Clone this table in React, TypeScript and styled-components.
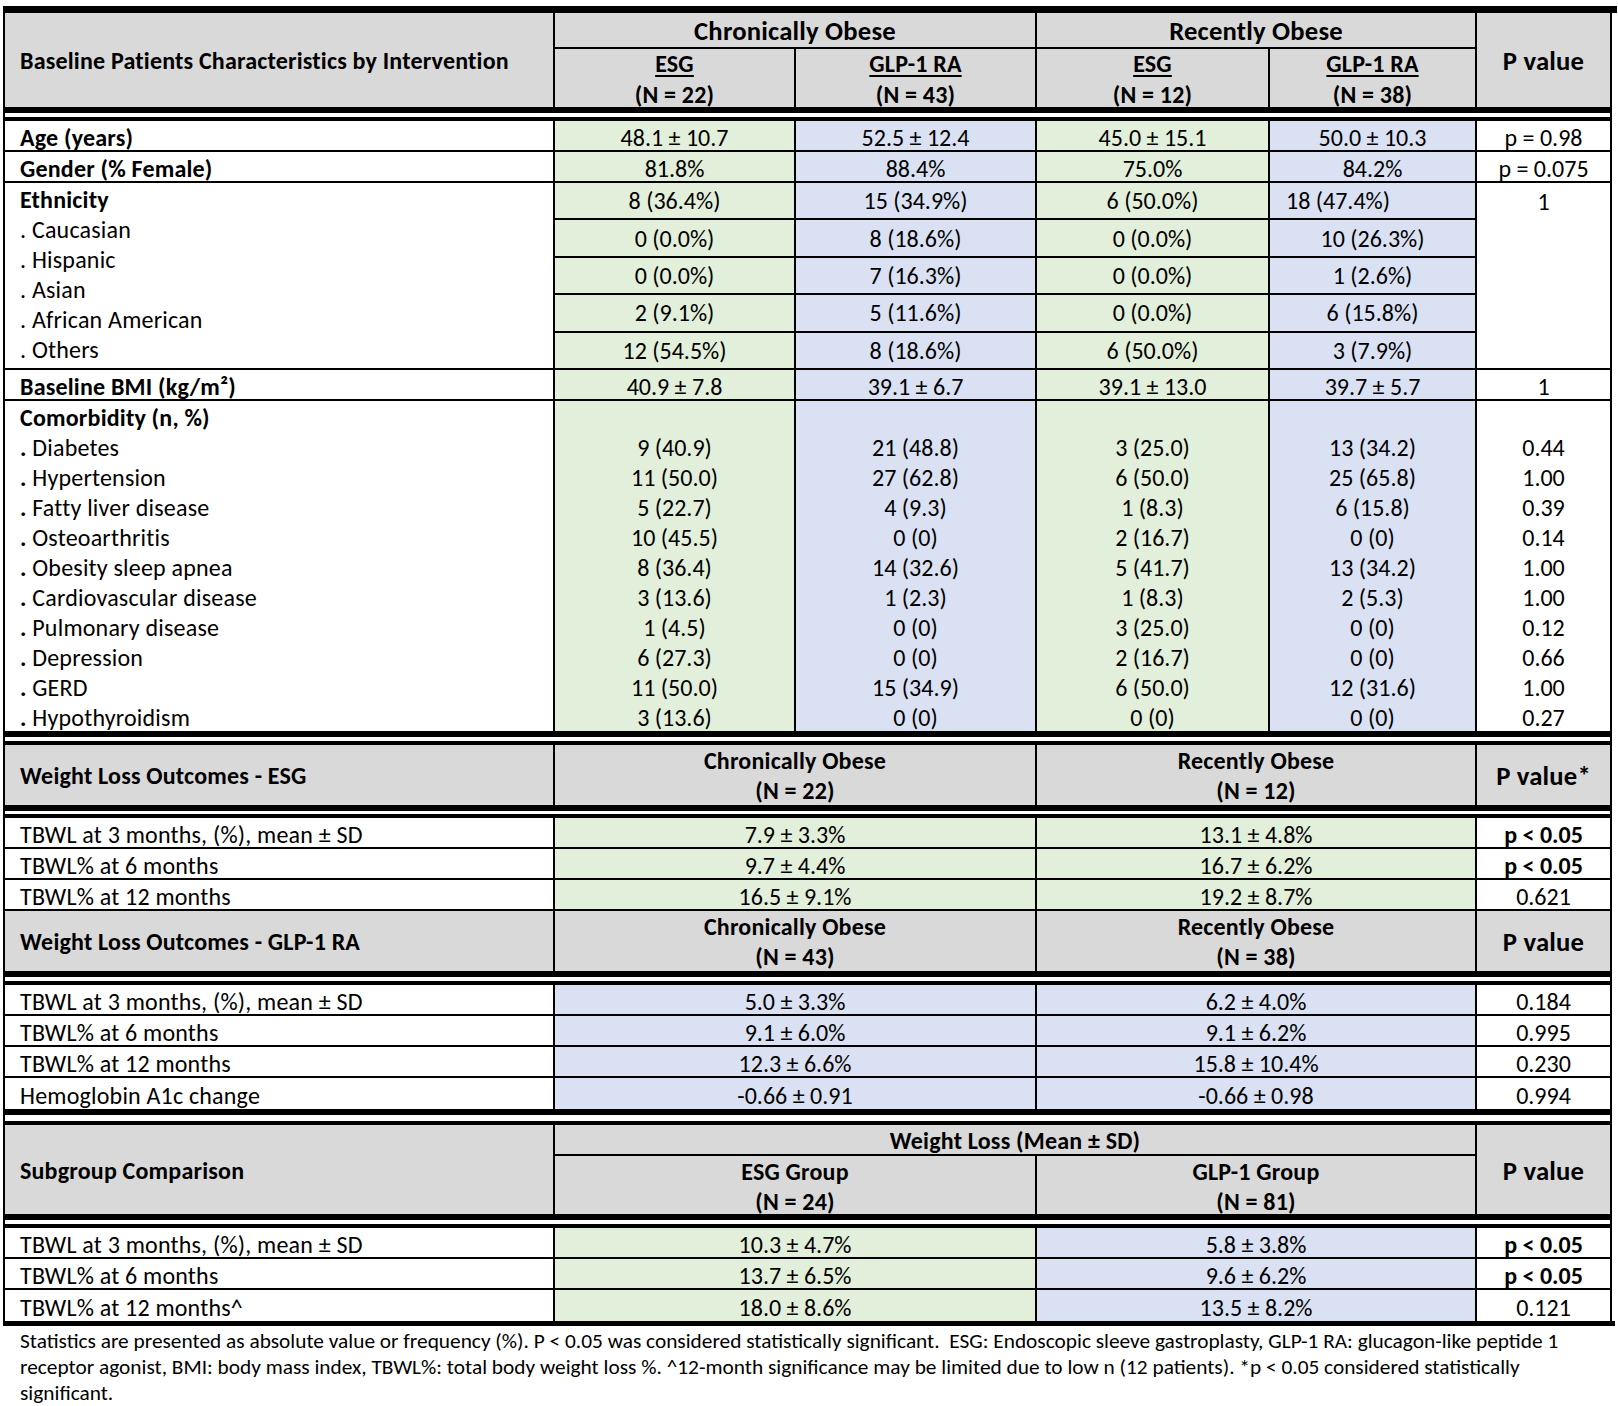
import React from "react";
import styled, { createGlobalStyle } from "styled-components";

const GRAY = "#d9d9d9";
const GREEN = "#e2efda";
const BLUE = "#d9e1f2";
const COLS = "550px 241px 241px 233px 207px 135px";
const FONT = `Carlito, Calibri, Lato, "Liberation Sans", sans-serif`;

type Tone = "white" | "gray" | "green" | "blue";
const toneBg: Record<Tone, string> = { white: "#fff", gray: GRAY, green: GREEN, blue: BLUE };

const GlobalStyle = createGlobalStyle`
  html, body { margin: 0; padding: 0; background: #fff; }
  body { font-family: ${FONT}; color: #000; font-size: 24px; }
  * { box-sizing: border-box; }
`;

const Page = styled.div`
  padding: 6px 0 0 3px;
  width: 1618px;
`;

const TopRule = styled.div`
  width: 1614px;
  height: 7px;
  background: #000;
`;

const BottomRule = styled.div`
  width: 1612px;
  height: 5px;
  background: #000;
`;

const Table = styled.div`
  width: 1609px;
  border-left: 2px solid #000;
`;

const DoubleRule = styled.div<{ $h?: number }>`
  height: ${(p) => p.$h ?? 14}px;
  border-top: 6px solid #000;
  border-bottom: 4px solid #000;
  border-right: 2px solid #000;
  background: #fff;
`;

const HeadGrid = styled.div<{ $rows: string }>`
  display: grid;
  grid-template-columns: ${COLS};
  grid-template-rows: ${(p) => p.$rows};
  background: ${GRAY};
  font-weight: 700;
`;

const HeadCell = styled.div<{
  $col: string;
  $row?: string;
  $big?: boolean;
  $left?: boolean;
  $rule?: boolean;
  $lh?: number;
  $top?: number;
}>`
  grid-column: ${(p) => p.$col};
  grid-row: ${(p) => p.$row ?? "1"};
  min-height: 0;
  display: flex;
  flex-direction: column;
  justify-content: ${(p) => (p.$top !== undefined ? "flex-start" : "center")};
  align-items: ${(p) => (p.$left ? "flex-start" : "center")};
  padding-left: ${(p) => (p.$left ? 15 : 0)}px;
  padding-top: ${(p) => p.$top ?? 2}px;
  border-right: 2px solid #000;
  border-bottom: ${(p) => (p.$rule ? "2px solid #000" : "0")};
  font-size: ${(p) => (p.$big ? "26.67px" : "24px")};
  line-height: ${(p) => p.$lh ?? 30}px;
  letter-spacing: 0.2px;
  white-space: nowrap;
  text-align: center;
`;

const Under = styled.span`
  text-decoration: underline;
  text-decoration-thickness: 2px;
  text-underline-offset: 3px;
`;

const Row = styled.div<{ $h: number; $line?: boolean }>`
  display: grid;
  grid-template-columns: ${COLS};
  grid-template-rows: minmax(0, 1fr);
  height: ${(p) => p.$h}px;
  border-bottom: ${(p) => (p.$line ? "2px solid #000" : "0")};
`;

const Cell = styled.div<{ $tone?: Tone; $span?: number; $label?: boolean; $bold?: boolean }>`
  grid-column: span ${(p) => p.$span ?? 1};
  min-height: 0;
  display: flex;
  align-items: center;
  justify-content: ${(p) => (p.$label ? "flex-start" : "center")};
  padding-left: ${(p) => (p.$label ? 15 : 0)}px;
  padding-top: 4px;
  line-height: 24px;
  border-right: 2px solid #000;
  background: ${(p) => toneBg[p.$tone ?? "white"]};
  font-weight: ${(p) => (p.$bold ? 700 : 400)};
  letter-spacing: ${(p) => (p.$label ? "0.2px" : "0")};
  white-space: nowrap;
`;

const Dot = styled.span`
  font-weight: 700;
`;

const LabelStack = styled.div`
  padding: 2px 0 0 15px;
  border-right: 2px solid #000;
  line-height: 30px;
  letter-spacing: 0.2px;
  white-space: nowrap;
`;

const StackLine = styled.div<{ $bold?: boolean }>`
  font-weight: ${(p) => (p.$bold ? 700 : 400)};
`;

const SubStack = styled.div<{ $tone: Tone; $plain?: boolean }>`
  display: flex;
  flex-direction: column;
  min-height: 0;
  background: ${(p) => toneBg[p.$tone]};
  border-right: 2px solid #000;
  & > * + * {
    border-top: ${(p) => (p.$plain ? "0" : "2px solid #000")};
  }
`;

const SubCell = styled.div<{ $indent?: number }>`
  flex: 1 1 0;
  display: flex;
  align-items: center;
  justify-content: ${(p) => (p.$indent ? "flex-start" : "center")};
  padding-left: ${(p) => p.$indent ?? 0}px;
  white-space: nowrap;
`;

const Footnote = styled.div`
  padding: 2px 0 0 17px;
  font-size: 21.33px;
  line-height: 26px;
`;

const FootLine = styled.div`
  white-space: nowrap;
`;

const tones: Tone[] = ["green", "blue", "green", "blue"];

const basics = [
  { label: "Age (years)", vals: ["48.1 ± 10.7", "52.5 ± 12.4", "45.0 ± 15.1", "50.0 ± 10.3"], p: "p = 0.98" },
  { label: "Gender (% Female)", vals: ["81.8%", "88.4%", "75.0%", "84.2%"], p: "p = 0.075" },
];

const ethnicLabels = ["Caucasian", "Hispanic", "Asian", "African American", "Others"];
const ethnicCols = [
  ["8 (36.4%)", "0 (0.0%)", "0 (0.0%)", "2 (9.1%)", "12 (54.5%)"],
  ["15 (34.9%)", "8 (18.6%)", "7 (16.3%)", "5 (11.6%)", "8 (18.6%)"],
  ["6 (50.0%)", "0 (0.0%)", "0 (0.0%)", "0 (0.0%)", "6 (50.0%)"],
  ["18 (47.4%)", "10 (26.3%)", "1 (2.6%)", "6 (15.8%)", "3 (7.9%)"],
];

const comorbid = [
  { label: "Diabetes", vals: ["9 (40.9)", "21 (48.8)", "3 (25.0)", "13 (34.2)"], p: "0.44" },
  { label: "Hypertension", vals: ["11 (50.0)", "27 (62.8)", "6 (50.0)", "25 (65.8)"], p: "1.00" },
  { label: "Fatty liver disease", vals: ["5 (22.7)", "4 (9.3)", "1 (8.3)", "6 (15.8)"], p: "0.39" },
  { label: "Osteoarthritis", vals: ["10 (45.5)", "0 (0)", "2 (16.7)", "0 (0)"], p: "0.14" },
  { label: "Obesity sleep apnea", vals: ["8 (36.4)", "14 (32.6)", "5 (41.7)", "13 (34.2)"], p: "1.00" },
  { label: "Cardiovascular disease", vals: ["3 (13.6)", "1 (2.3)", "1 (8.3)", "2 (5.3)"], p: "1.00" },
  { label: "Pulmonary disease", vals: ["1 (4.5)", "0 (0)", "3 (25.0)", "0 (0)"], p: "0.12" },
  { label: "Depression", vals: ["6 (27.3)", "0 (0)", "2 (16.7)", "0 (0)"], p: "0.66" },
  { label: "GERD", vals: ["11 (50.0)", "15 (34.9)", "6 (50.0)", "12 (31.6)"], p: "1.00" },
  { label: "Hypothyroidism", vals: ["3 (13.6)", "0 (0)", "0 (0)", "0 (0)"], p: "0.27" },
];

type PairRow = { label: string; a: string; b: string; p: string; bold?: boolean };

const esgRows: PairRow[] = [
  { label: "TBWL at 3 months, (%), mean ± SD", a: "7.9 ± 3.3%", b: "13.1 ± 4.8%", p: "p < 0.05", bold: true },
  { label: "TBWL% at 6 months", a: "9.7 ± 4.4%", b: "16.7 ± 6.2%", p: "p < 0.05", bold: true },
  { label: "TBWL% at 12 months", a: "16.5 ± 9.1%", b: "19.2 ± 8.7%", p: "0.621" },
];

const glpRows: PairRow[] = [
  { label: "TBWL at 3 months, (%), mean ± SD", a: "5.0 ± 3.3%", b: "6.2 ± 4.0%", p: "0.184" },
  { label: "TBWL% at 6 months", a: "9.1 ± 6.0%", b: "9.1 ± 6.2%", p: "0.995" },
  { label: "TBWL% at 12 months", a: "12.3 ± 6.6%", b: "15.8 ± 10.4%", p: "0.230" },
  { label: "Hemoglobin A1c change", a: "-0.66 ± 0.91", b: "-0.66 ± 0.98", p: "0.994" },
];

const subRows: PairRow[] = [
  { label: "TBWL at 3 months, (%), mean ± SD", a: "10.3 ± 4.7%", b: "5.8 ± 3.8%", p: "p < 0.05", bold: true },
  { label: "TBWL% at 6 months", a: "13.7 ± 6.5%", b: "9.6 ± 6.2%", p: "p < 0.05", bold: true },
  { label: "TBWL% at 12 months^", a: "18.0 ± 8.6%", b: "13.5 ± 8.2%", p: "0.121" },
];

function PairRows({ rows, toneA, toneB, lastLine }: { rows: PairRow[]; toneA: Tone; toneB: Tone; lastLine: boolean }) {
  return (
    <>
      {rows.map((r, i) => {
        const isLast = i === rows.length - 1;
        const line = !isLast || lastLine;
        return (
          <Row key={r.label} $h={31} $line={line}>
            <Cell $label>{r.label}</Cell>
            <Cell $span={2} $tone={toneA}>{r.a}</Cell>
            <Cell $span={2} $tone={toneB}>{r.b}</Cell>
            <Cell $bold={r.bold}>{r.p}</Cell>
          </Row>
        );
      })}
    </>
  );
}

function GroupHeader({ title, n1, n2, p }: { title: string; n1: string; n2: string; p: string }) {
  return (
    <HeadGrid $rows="60px">
      <HeadCell $col="1" $left>{title}</HeadCell>
      <HeadCell $col="2 / 4">
        <span>Chronically Obese</span>
        <span>(N = {n1})</span>
      </HeadCell>
      <HeadCell $col="4 / 6">
        <span>Recently Obese</span>
        <span>(N = {n2})</span>
      </HeadCell>
      <HeadCell $col="6" $big>{p}</HeadCell>
    </HeadGrid>
  );
}

export default function App() {
  return (
    <>
      <GlobalStyle />
      <Page>
        <TopRule />
        <Table>
          <HeadGrid $rows="36px 58px">
            <HeadCell $col="1" $row="1 / 3" $left>Baseline Patients Characteristics by Intervention</HeadCell>
            <HeadCell $col="2 / 4" $big $rule>Chronically Obese</HeadCell>
            <HeadCell $col="4 / 6" $big $rule>Recently Obese</HeadCell>
            <HeadCell $col="6" $row="1 / 3" $big>P value</HeadCell>
            <HeadCell $col="2" $row="2" $lh={31}>
              <Under>ESG</Under>
              <span>(N = 22)</span>
            </HeadCell>
            <HeadCell $col="3" $row="2" $lh={31}>
              <Under>GLP-1 RA</Under>
              <span>(N = 43)</span>
            </HeadCell>
            <HeadCell $col="4" $row="2" $lh={31}>
              <Under>ESG</Under>
              <span>(N = 12)</span>
            </HeadCell>
            <HeadCell $col="5" $row="2" $lh={31}>
              <Under>GLP-1 RA</Under>
              <span>(N = 38)</span>
            </HeadCell>
          </HeadGrid>
          <DoubleRule />

          {basics.map((b) => (
            <Row key={b.label} $h={31} $line>
              <Cell $label $bold>{b.label}</Cell>
              {b.vals.map((v, i) => (
                <Cell key={i} $tone={tones[i]}>{v}</Cell>
              ))}
              <Cell>{b.p}</Cell>
            </Row>
          ))}

          <Row $h={187} $line>
            <LabelStack>
              <StackLine $bold>Ethnicity</StackLine>
              {ethnicLabels.map((l) => (
                <StackLine key={l}>. {l}</StackLine>
              ))}
            </LabelStack>
            {ethnicCols.map((col, ci) => (
              <SubStack key={ci} $tone={tones[ci]}>
                {col.map((v, ri) => (
                  <SubCell key={ri} $indent={ci === 3 && ri === 0 ? 16 : undefined}>{v}</SubCell>
                ))}
              </SubStack>
            ))}
            <SubStack $tone="white" $plain>
              <SubCell>1</SubCell>
              <SubCell />
              <SubCell />
              <SubCell />
              <SubCell />
            </SubStack>
          </Row>

          <Row $h={31} $line>
            <Cell $label $bold>Baseline BMI (kg/m²)</Cell>
            {["40.9 ± 7.8", "39.1 ± 6.7", "39.1 ± 13.0", "39.7 ± 5.7"].map((v, i) => (
              <Cell key={i} $tone={tones[i]}>{v}</Cell>
            ))}
            <Cell>1</Cell>
          </Row>

          <Row $h={30}>
            <Cell $label $bold>Comorbidity (n, %)</Cell>
            {tones.map((t, i) => (
              <Cell key={i} $tone={t} />
            ))}
            <Cell />
          </Row>
          {comorbid.map((c) => (
            <Row key={c.label} $h={30}>
              <Cell $label>
                <Dot>.</Dot>&nbsp;{c.label}
              </Cell>
              {c.vals.map((v, i) => (
                <Cell key={i} $tone={tones[i]}>{v}</Cell>
              ))}
              <Cell>{c.p}</Cell>
            </Row>
          ))}
          <DoubleRule />

          <GroupHeader title="Weight Loss Outcomes - ESG" n1="22" n2="12" p="P value*" />
          <DoubleRule $h={13} />
          <PairRows rows={esgRows} toneA="green" toneB="green" lastLine />

          <GroupHeader title="Weight Loss Outcomes - GLP-1 RA" n1="43" n2="38" p="P value" />
          <DoubleRule />
          <PairRows rows={glpRows} toneA="blue" toneB="blue" lastLine={false} />
          <DoubleRule $h={16} />

          <HeadGrid $rows="31px 58px">
            <HeadCell $col="1" $row="1 / 3" $left>Subgroup Comparison</HeadCell>
            <HeadCell $col="2 / 6" $rule>Weight Loss (Mean ± SD)</HeadCell>
            <HeadCell $col="6" $row="1 / 3" $big>P value</HeadCell>
            <HeadCell $col="2 / 4" $row="2" $top={1}>
              <span>ESG Group</span>
              <span>(N = 24)</span>
            </HeadCell>
            <HeadCell $col="4 / 6" $row="2" $top={1}>
              <span>GLP-1 Group</span>
              <span>(N = 81)</span>
            </HeadCell>
          </HeadGrid>
          <DoubleRule />
          <PairRows rows={subRows} toneA="green" toneB="blue" lastLine={false} />
        </Table>
        <BottomRule />
        <Footnote>
          <FootLine>
            Statistics are presented as absolute value or frequency (%). P &lt; 0.05 was considered statistically significant.&nbsp; ESG: Endoscopic sleeve gastroplasty, GLP-1 RA: glucagon-like peptide 1
          </FootLine>
          <FootLine>
            receptor agonist, BMI: body mass index, TBWL%: total body weight loss %. ^12-month significance may be limited due to low n (12 patients). *p &lt; 0.05 considered statistically
          </FootLine>
          <FootLine>significant.</FootLine>
        </Footnote>
      </Page>
    </>
  );
}
